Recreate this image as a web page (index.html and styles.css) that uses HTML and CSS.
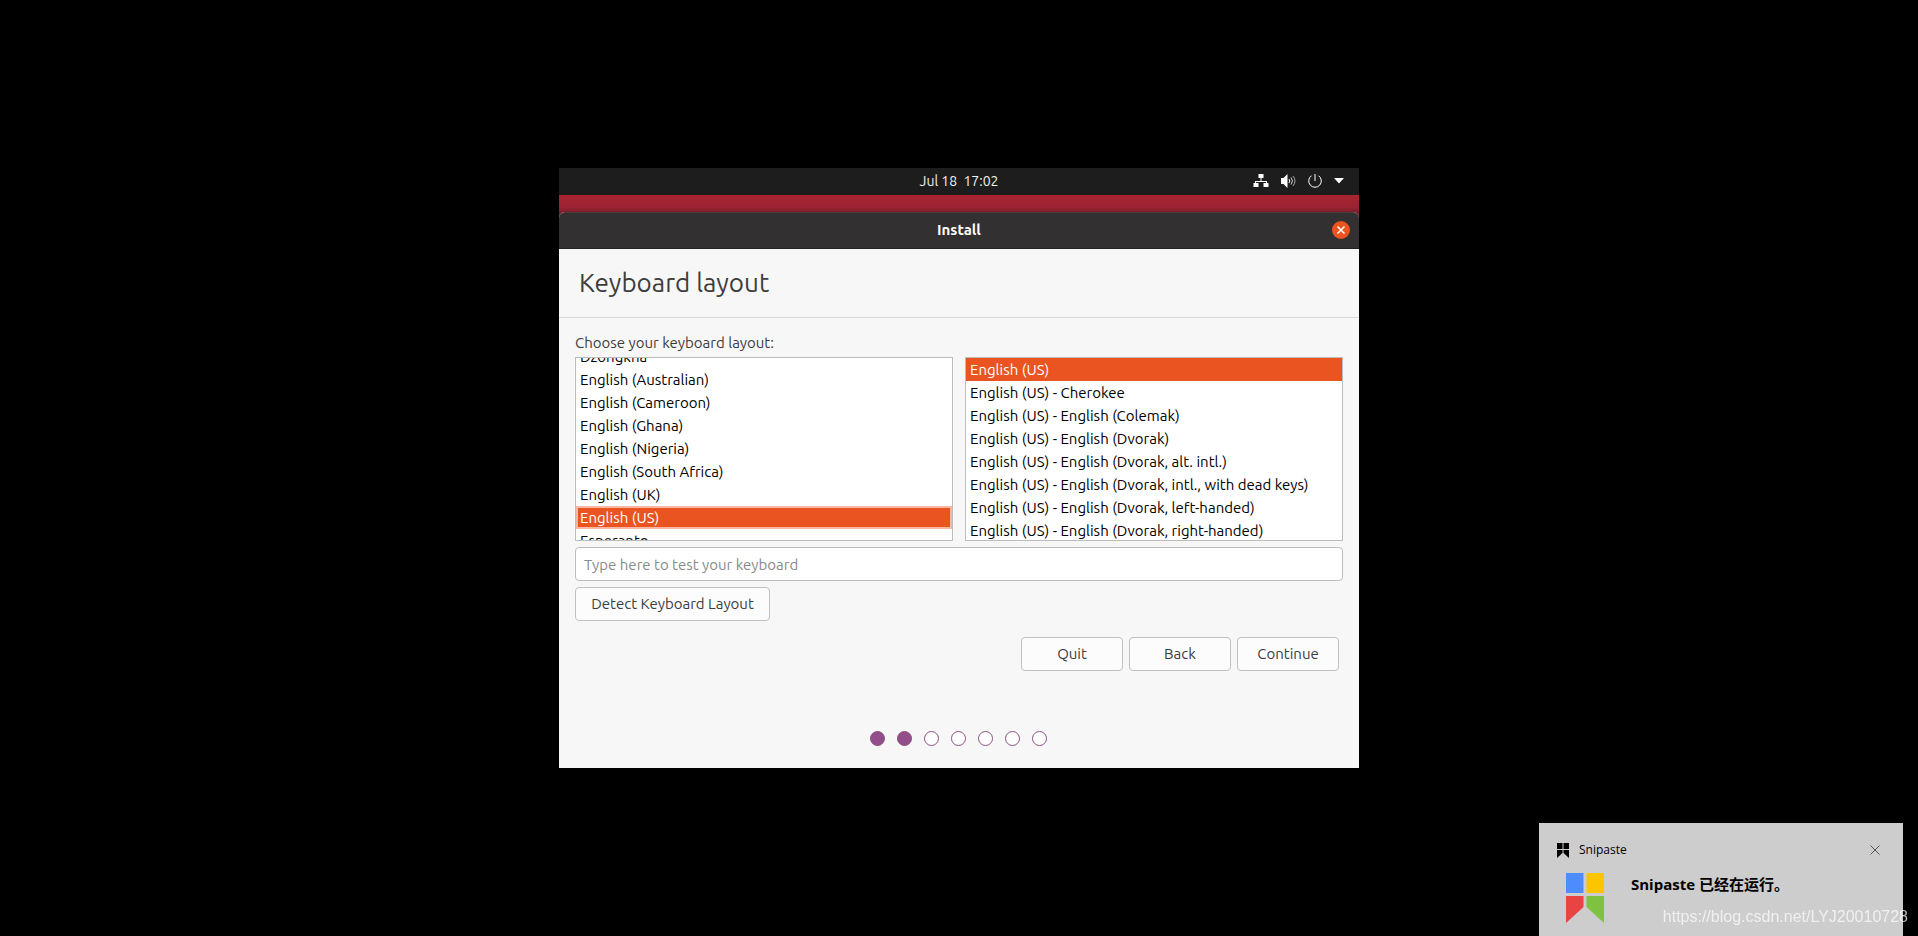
FILE: index.html
```html
<!DOCTYPE html>
<html lang="en">
<head>
  <meta charset="utf-8">
  <meta name="viewport" content="width=device-width, initial-scale=1">
  <title>Install</title>
  <link rel="stylesheet" href="styles.css">
</head>
<body>
<main class="screen">
  <div class="topbar">
    <time class="clock">Jul 18&nbsp; 17:02</time>
    <div class="tray">
      <svg class="tray-icon" viewBox="0 0 16 16" fill="#fff">
        <path d="M5.5 1h5v4h-2v3H14v2h1.500v4h-5v-4H13V9H3v1h2.500v4h-5v-4H2V8h5.500V5h-2z"/>
      </svg>
      <svg class="tray-icon" viewBox="0 0 16 16" fill="none" stroke="#fff">
        <path d="M1 5h2.500l4-4v14l-4-4H1z" fill="#fff" stroke="none"/>
        <path d="M9 6q1.500 2 0 4"/>
        <path d="M11 4.500q3 3.500 0 7" opacity=".8"/>
        <path d="M13 3q4 5 0 10" opacity=".6"/>
      </svg>
      <svg class="tray-icon" viewBox="0 0 16 16" fill="none" stroke="#fff">
        <path d="M4.500 2.700a6.300 6.300 0 1 0 7 0M8 1v7"/>
      </svg>
      <svg class="tray-arrow" viewBox="0 0 10 6" fill="#fff">
        <path d="M0 0h10L5 5.500z"/>
      </svg>
    </div>
  </div>

  <section class="window">
    <header class="titlebar">
      <span class="title">Install</span>
      <button type="button" class="close" aria-label="Close">
        <svg viewBox="0 0 18 18" fill="none" stroke="#fff" stroke-width="1.500">
          <path d="M5.500 5.500l7 7M12.500 5.500l-7 7"/>
        </svg>
      </button>
    </header>
    <h1 class="heading">Keyboard layout</h1>
    <form class="content">
      <label class="label" for="layout">Choose your keyboard layout:</label>
      <div class="lists">
        <select class="list focused" id="layout" size="8">
          <option>Dzongkha</option>
          <option>English (Australian)</option>
          <option>English (Cameroon)</option>
          <option>English (Ghana)</option>
          <option>English (Nigeria)</option>
          <option>English (South Africa)</option>
          <option>English (UK)</option>
          <option selected>English (US)</option>
          <option>Esperanto</option>
        </select>
        <select class="list" id="variant" size="8" aria-label="Variant">
          <option selected>English (US)</option>
          <option>English (US) - Cherokee</option>
          <option>English (US) - English (Colemak)</option>
          <option>English (US) - English (Dvorak)</option>
          <option>English (US) - English (Dvorak, alt. intl.)</option>
          <option>English (US) - English (Dvorak, intl., with dead keys)</option>
          <option>English (US) - English (Dvorak, left-handed)</option>
          <option>English (US) - English (Dvorak, right-handed)</option>
        </select>
      </div>
      <input class="entry" type="text" placeholder="Type here to test your keyboard" aria-label="Test your keyboard">
      <button type="button" class="button detect">Detect Keyboard Layout</button>
      <div class="actions">
        <button type="button" class="button">Quit</button>
        <button type="button" class="button">Back</button>
        <button type="button" class="button">Continue</button>
      </div>
    </form>
    <div class="steps">
      <span class="dot done"></span>
      <span class="dot done"></span>
      <span class="dot"></span>
      <span class="dot"></span>
      <span class="dot"></span>
      <span class="dot"></span>
      <span class="dot"></span>
    </div>
  </section>
</main>

<aside class="toast">
  <div class="toast-head">
    <svg class="toast-app" viewBox="0 0 12 16">
      <path d="M0 1h5.500v6H0zM6.500 1H12v6H6.500zM0 8h5.500v3L0 16zM6.500 8H12v8l-5.500-5z"/>
    </svg>
    <span class="toast-name">Snipaste</span>
    <button type="button" class="toast-close" aria-label="Dismiss">
      <svg viewBox="0 0 10 10" fill="none" stroke="#555"><path d="M.5.500l9 9M9.500.500l-9 9"/></svg>
    </button>
  </div>
  <div class="toast-body">
    <svg class="toast-logo" viewBox="0 0 38 50">
      <path fill="#4c8dfb" d="M0 0h17.500v20H0z"/>
      <path fill="#fdc500" d="M20.500 0H38v20H20.500z"/>
      <path fill="#ea4343" d="M0 23h17.500v11L0 50z"/>
      <path fill="#7fc241" d="M20.500 23H38v27L20.500 34z"/>
    </svg>
    <strong class="toast-text" lang="zh">Snipaste 已经在运行。</strong>
  </div>
</aside>
<div class="watermark">https://blog.csdn.net/LYJ20010728</div>

<script>
  // the layout list opens part-way through its first row
  document.getElementById('layout').scrollTop = 13;
</script>
</body>
</html>
```
FILE: styles.css
```css
* {
  box-sizing: border-box;
}

body {
  margin: 0;
  min-height: 100vh;
  display: flex;
  align-items: center;
  justify-content: center;
  background: #000;
  color: #3d3d3d;
  font: 15px/20px Ubuntu, "Noto Sans", sans-serif;
  overflow: hidden;
}

button, input, select {
  font: inherit;
  color: inherit;
}

.screen {
  width: 100%;
  max-width: 800px;
  background: linear-gradient(#a8252f 27px, #9d2233 39px, #7c1f2b 44px);
}

.topbar {
  display: grid;
  grid-template-columns: 1fr auto 1fr;
  align-items: center;
  height: 27px;
  margin-bottom: 17px;
  padding: 0 15px 2px;
  background: #1d1d1d;
  color: #f2f2f2;
  font-size: 14px;
}

.clock {
  grid-column: 2;
}

.tray {
  display: flex;
  align-items: center;
  justify-content: flex-end;
  gap: 11px;
}

.tray-icon {
  width: 16px;
  height: 16px;
}

.tray-arrow {
  width: 10px;
  height: 6px;
}

.window {
  background: #f7f7f7;
  border-radius: 6px 6px 0 0;
}

.titlebar {
  display: grid;
  grid-template-columns: 1fr auto 1fr;
  align-items: center;
  height: 37px;
  padding: 0 9px 1px;
  background: #323030;
  border-top: 1px solid #4e3b3b;
  border-bottom: 1px solid #222;
  border-radius: 6px 6px 0 0;
  color: #fff;
}

.title {
  grid-column: 2;
  font-weight: bold;
}

.close {
  justify-self: end;
  width: 18px;
  height: 18px;
  padding: 0;
  border: 0;
  border-radius: 50%;
  background: #e95420;
}

.close svg {
  display: block;
}

.heading {
  margin: 0;
  padding: 18px 20px;
  border-bottom: 1px solid #dadada;
  font-size: 26px;
  line-height: 32px;
  font-weight: normal;
}

.content {
  display: flex;
  flex-direction: column;
  gap: 6px;
  padding: 15px 16px 0;
}

.label {
  margin-bottom: -2px;
}

.lists {
  display: grid;
  grid-template-columns: 1fr 1fr;
  gap: 12px;
}

.list {
  height: 184px;
  min-width: 0;
  padding: 0;
  border: 1px solid #bcbcbc;
  border-radius: 0;
  background: #fff;
  color: #000;
  overflow-y: scroll;
  scrollbar-width: none;
  outline: 0;
}

.list option {
  height: 23px;
  min-height: 23px;
  padding: 3px 4px;
}

.list option:checked {
  background: #e95420 linear-gradient(#e95420, #e95420);
  color: #fff;
}

.list.focused option:checked {
  box-shadow: inset 0 0 0 2px #f6b8a2;
}

.entry {
  height: 34px;
  padding: 0 8px;
  border: 1px solid #bcbcbc;
  border-radius: 4px;
  background: #fff;
}

.entry::placeholder {
  color: #8a8a8a;
}

.button {
  width: 102px;
  height: 34px;
  padding: 0;
  border: 1px solid #c0c0c0;
  border-radius: 4px;
  background: #fcfcfc;
}

.detect {
  width: 195px;
}

.actions {
  display: flex;
  justify-content: flex-end;
  gap: 6px;
  margin-top: 10px;
  padding-right: 4px;
}

.steps {
  display: flex;
  justify-content: center;
  gap: 12px;
  padding: 60px 2px 22px 0;
}

.dot {
  width: 15px;
  height: 15px;
  border: 1px solid #8b5180;
  border-radius: 50%;
  background: #fff;
}

.dot.done {
  background: #924d8b;
}

.toast {
  position: fixed;
  right: 15px;
  bottom: 0;
  width: 364px;
  height: 113px;
  padding: 17px 23px 0 18px;
  background: #cdcdcd;
  color: #000;
}

.toast-head {
  display: flex;
  align-items: center;
  gap: 10px;
  font: 12px/20px "Open Sans", sans-serif;
}

.toast-app {
  width: 12px;
  height: 16px;
}

.toast-close {
  margin-left: auto;
  padding: 0;
  border: 0;
  background: none;
}

.toast-close svg {
  display: block;
  width: 10px;
  height: 10px;
}

.toast-body {
  display: flex;
  gap: 27px;
  padding: 13px 0 0 9px;
}

.toast-logo {
  width: 38px;
  height: 50px;
}

.toast-text {
  font: bold 15px/22px "Open Sans", "Noto Sans CJK SC", sans-serif;
}

.watermark {
  position: fixed;
  right: 10px;
  bottom: 9px;
  color: rgba(255, 255, 255, .7);
  font: 16px/20px "Liberation Sans", Arial, sans-serif;
}
```
